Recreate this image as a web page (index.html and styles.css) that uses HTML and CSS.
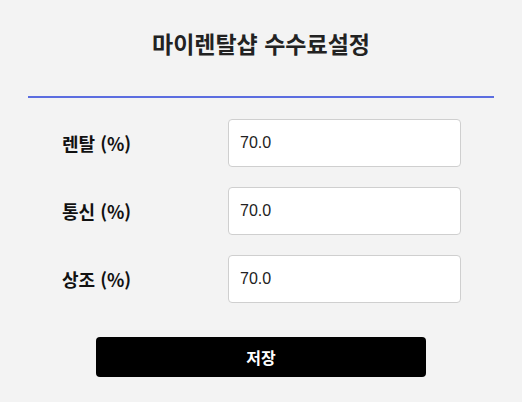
FILE: index.html
```html
<!DOCTYPE html>
<html lang="ko">
<head>
<meta charset="utf-8">
<link rel="stylesheet" href="styles.css">
</head>
<body>
<div class="panel">
  <div class="header"><h1 class="title">마이렌탈샵 수수료설정</h1></div>
  <form class="form">
    <div class="rows">
      <label class="label">렌탈 (%)</label>
      <input class="field" type="text" value="70.0">
      <label class="label">통신 (%)</label>
      <input class="field" type="text" value="70.0">
      <label class="label">상조 (%)</label>
      <input class="field" type="text" value="70.0">
    </div>
    <button class="save" type="button">저장</button>
  </form>
</div>
</body>
</html>
```
FILE: styles.css
```css
html, body {
  margin: 0;
  padding: 0;
  background: #f3f3f3;
}
body {
  font-family: "Noto Sans CJK KR", "Noto Sans", sans-serif;
  color: #222;
}
.panel {
  width: 466px;
  margin: 0 auto;
}
.header {
  padding: 27px 0 37px;
  border-bottom: 2px solid #5b6de0;
}
.title {
  margin: 0;
  font-size: 23px;
  line-height: 32px;
  font-weight: 700;
  text-align: center;
  color: #222;
}
.form {
  padding: 21px 33px 0 34px;
  display: flex;
  flex-direction: column;
}
.rows {
  display: grid;
  grid-template-columns: 166px 233px;
  row-gap: 20px;
  align-items: center;
}
.label {
  font-size: 18px;
  font-weight: 700;
  color: #111;
  line-height: 24px;
}
.field {
  box-sizing: border-box;
  width: 233px;
  height: 48px;
  margin: 0;
  padding: 0 11px;
  border: 1px solid #cfcfcf;
  border-radius: 4px;
  background: #fff;
  font-family: "Liberation Sans", Arial, sans-serif;
  font-size: 16px;
  color: #222;
}
.save {
  align-self: center;
  margin-top: 34px;
  margin-left: -1px;
  width: 330px;
  height: 40px;
  border: 0;
  border-radius: 4px;
  background: #000;
  color: #fff;
  font-family: "Noto Sans CJK KR", sans-serif;
  font-size: 16px;
  font-weight: 700;
}
```
